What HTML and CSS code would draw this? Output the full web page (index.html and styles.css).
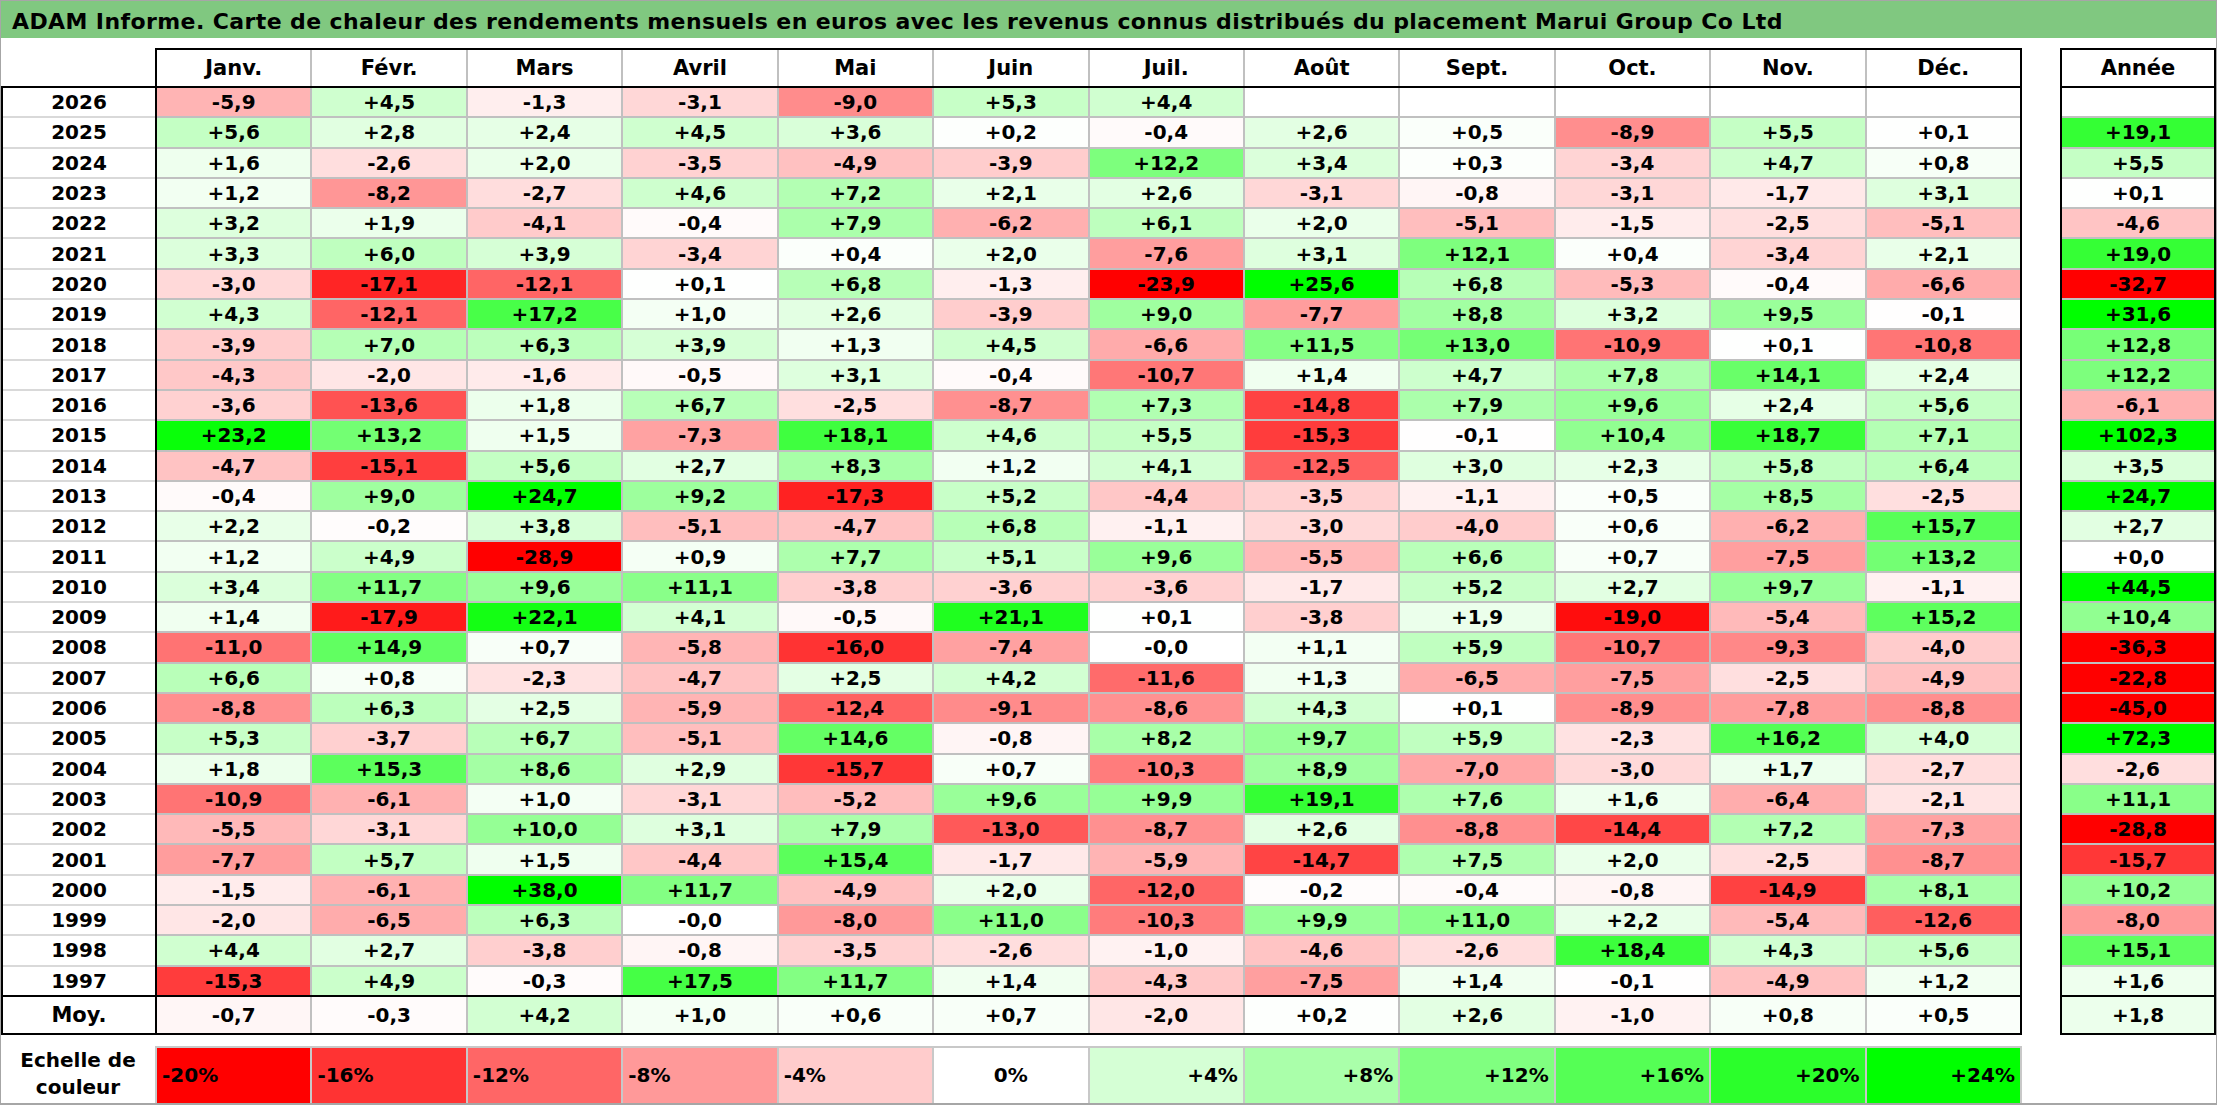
FILE: index.html
```html
<!DOCTYPE html>
<html lang="fr">
<head>
<meta charset="utf-8">
<title>ADAM Informe - Marui Group Co Ltd</title>
<link rel="stylesheet" href="styles.css">
</head>
<body>
<div class="sheet">
  <div class="title">ADAM Informe. Carte de chaleur des rendements mensuels en euros avec les revenus connus distribués du placement Marui Group Co Ltd</div>
  <div class="main">
    <div class="years">
      <div class="yhead"></div>
      <div class="ybox">
        <div class="ybody">
          <div class="yl">2026</div><div class="yl">2025</div><div class="yl">2024</div><div class="yl">2023</div><div class="yl">2022</div>
          <div class="yl">2021</div><div class="yl">2020</div><div class="yl">2019</div><div class="yl">2018</div><div class="yl">2017</div>
          <div class="yl">2016</div><div class="yl">2015</div><div class="yl">2014</div><div class="yl">2013</div><div class="yl">2012</div>
          <div class="yl">2011</div><div class="yl">2010</div><div class="yl">2009</div><div class="yl">2008</div><div class="yl">2007</div>
          <div class="yl">2006</div><div class="yl">2005</div><div class="yl">2004</div><div class="yl">2003</div><div class="yl">2002</div>
          <div class="yl">2001</div><div class="yl">2000</div><div class="yl">1999</div><div class="yl">1998</div><div class="yl">1997</div>
        </div>
        <div class="yavg">Moy.</div>
      </div>
    </div>

    <div class="months">
      <div class="hrow">
        <div class="h">Janv.</div><div class="h">Févr.</div><div class="h">Mars</div><div class="h">Avril</div><div class="h">Mai</div><div class="h">Juin</div>
        <div class="h">Juil.</div><div class="h">Août</div><div class="h">Sept.</div><div class="h">Oct.</div><div class="h">Nov.</div><div class="h">Déc.</div>
      </div>
      <div class="body">
        <!-- 2026 -->
        <div class="c" style="--v:-5.9">-5,9</div><div class="c" style="--v:4.5">+4,5</div><div class="c" style="--v:-1.3">-1,3</div><div class="c" style="--v:-3.1">-3,1</div><div class="c" style="--v:-9.0">-9,0</div><div class="c" style="--v:5.3">+5,3</div><div class="c" style="--v:4.4">+4,4</div><div class="c e"></div><div class="c e"></div><div class="c e"></div><div class="c e"></div><div class="c e"></div>
        <!-- 2025 -->
        <div class="c" style="--v:5.6">+5,6</div><div class="c" style="--v:2.8">+2,8</div><div class="c" style="--v:2.4">+2,4</div><div class="c" style="--v:4.5">+4,5</div><div class="c" style="--v:3.6">+3,6</div><div class="c" style="--v:0.2">+0,2</div><div class="c" style="--v:-0.4">-0,4</div><div class="c" style="--v:2.6">+2,6</div><div class="c" style="--v:0.5">+0,5</div><div class="c" style="--v:-8.9">-8,9</div><div class="c" style="--v:5.5">+5,5</div><div class="c" style="--v:0.1">+0,1</div>
        <!-- 2024 -->
        <div class="c" style="--v:1.6">+1,6</div><div class="c" style="--v:-2.6">-2,6</div><div class="c" style="--v:2.0">+2,0</div><div class="c" style="--v:-3.5">-3,5</div><div class="c" style="--v:-4.9">-4,9</div><div class="c" style="--v:-3.9">-3,9</div><div class="c" style="--v:12.2">+12,2</div><div class="c" style="--v:3.4">+3,4</div><div class="c" style="--v:0.3">+0,3</div><div class="c" style="--v:-3.4">-3,4</div><div class="c" style="--v:4.7">+4,7</div><div class="c" style="--v:0.8">+0,8</div>
        <!-- 2023 -->
        <div class="c" style="--v:1.2">+1,2</div><div class="c" style="--v:-8.2">-8,2</div><div class="c" style="--v:-2.7">-2,7</div><div class="c" style="--v:4.6">+4,6</div><div class="c" style="--v:7.2">+7,2</div><div class="c" style="--v:2.1">+2,1</div><div class="c" style="--v:2.6">+2,6</div><div class="c" style="--v:-3.1">-3,1</div><div class="c" style="--v:-0.8">-0,8</div><div class="c" style="--v:-3.1">-3,1</div><div class="c" style="--v:-1.7">-1,7</div><div class="c" style="--v:3.1">+3,1</div>
        <!-- 2022 -->
        <div class="c" style="--v:3.2">+3,2</div><div class="c" style="--v:1.9">+1,9</div><div class="c" style="--v:-4.1">-4,1</div><div class="c" style="--v:-0.4">-0,4</div><div class="c" style="--v:7.9">+7,9</div><div class="c" style="--v:-6.2">-6,2</div><div class="c" style="--v:6.1">+6,1</div><div class="c" style="--v:2.0">+2,0</div><div class="c" style="--v:-5.1">-5,1</div><div class="c" style="--v:-1.5">-1,5</div><div class="c" style="--v:-2.5">-2,5</div><div class="c" style="--v:-5.1">-5,1</div>
        <!-- 2021 -->
        <div class="c" style="--v:3.3">+3,3</div><div class="c" style="--v:6.0">+6,0</div><div class="c" style="--v:3.9">+3,9</div><div class="c" style="--v:-3.4">-3,4</div><div class="c" style="--v:0.4">+0,4</div><div class="c" style="--v:2.0">+2,0</div><div class="c" style="--v:-7.6">-7,6</div><div class="c" style="--v:3.1">+3,1</div><div class="c" style="--v:12.1">+12,1</div><div class="c" style="--v:0.4">+0,4</div><div class="c" style="--v:-3.4">-3,4</div><div class="c" style="--v:2.1">+2,1</div>
        <!-- 2020 -->
        <div class="c" style="--v:-3.0">-3,0</div><div class="c" style="--v:-17.1">-17,1</div><div class="c" style="--v:-12.1">-12,1</div><div class="c" style="--v:0.1">+0,1</div><div class="c" style="--v:6.8">+6,8</div><div class="c" style="--v:-1.3">-1,3</div><div class="c" style="--v:-23.9">-23,9</div><div class="c" style="--v:25.6">+25,6</div><div class="c" style="--v:6.8">+6,8</div><div class="c" style="--v:-5.3">-5,3</div><div class="c" style="--v:-0.4">-0,4</div><div class="c" style="--v:-6.6">-6,6</div>
        <!-- 2019 -->
        <div class="c" style="--v:4.3">+4,3</div><div class="c" style="--v:-12.1">-12,1</div><div class="c" style="--v:17.2">+17,2</div><div class="c" style="--v:1.0">+1,0</div><div class="c" style="--v:2.6">+2,6</div><div class="c" style="--v:-3.9">-3,9</div><div class="c" style="--v:9.0">+9,0</div><div class="c" style="--v:-7.7">-7,7</div><div class="c" style="--v:8.8">+8,8</div><div class="c" style="--v:3.2">+3,2</div><div class="c" style="--v:9.5">+9,5</div><div class="c" style="--v:-0.1">-0,1</div>
        <!-- 2018 -->
        <div class="c" style="--v:-3.9">-3,9</div><div class="c" style="--v:7.0">+7,0</div><div class="c" style="--v:6.3">+6,3</div><div class="c" style="--v:3.9">+3,9</div><div class="c" style="--v:1.3">+1,3</div><div class="c" style="--v:4.5">+4,5</div><div class="c" style="--v:-6.6">-6,6</div><div class="c" style="--v:11.5">+11,5</div><div class="c" style="--v:13.0">+13,0</div><div class="c" style="--v:-10.9">-10,9</div><div class="c" style="--v:0.1">+0,1</div><div class="c" style="--v:-10.8">-10,8</div>
        <!-- 2017 -->
        <div class="c" style="--v:-4.3">-4,3</div><div class="c" style="--v:-2.0">-2,0</div><div class="c" style="--v:-1.6">-1,6</div><div class="c" style="--v:-0.5">-0,5</div><div class="c" style="--v:3.1">+3,1</div><div class="c" style="--v:-0.4">-0,4</div><div class="c" style="--v:-10.7">-10,7</div><div class="c" style="--v:1.4">+1,4</div><div class="c" style="--v:4.7">+4,7</div><div class="c" style="--v:7.8">+7,8</div><div class="c" style="--v:14.1">+14,1</div><div class="c" style="--v:2.4">+2,4</div>
        <!-- 2016 -->
        <div class="c" style="--v:-3.6">-3,6</div><div class="c" style="--v:-13.6">-13,6</div><div class="c" style="--v:1.8">+1,8</div><div class="c" style="--v:6.7">+6,7</div><div class="c" style="--v:-2.5">-2,5</div><div class="c" style="--v:-8.7">-8,7</div><div class="c" style="--v:7.3">+7,3</div><div class="c" style="--v:-14.8">-14,8</div><div class="c" style="--v:7.9">+7,9</div><div class="c" style="--v:9.6">+9,6</div><div class="c" style="--v:2.4">+2,4</div><div class="c" style="--v:5.6">+5,6</div>
        <!-- 2015 -->
        <div class="c" style="--v:23.2">+23,2</div><div class="c" style="--v:13.2">+13,2</div><div class="c" style="--v:1.5">+1,5</div><div class="c" style="--v:-7.3">-7,3</div><div class="c" style="--v:18.1">+18,1</div><div class="c" style="--v:4.6">+4,6</div><div class="c" style="--v:5.5">+5,5</div><div class="c" style="--v:-15.3">-15,3</div><div class="c" style="--v:-0.1">-0,1</div><div class="c" style="--v:10.4">+10,4</div><div class="c" style="--v:18.7">+18,7</div><div class="c" style="--v:7.1">+7,1</div>
        <!-- 2014 -->
        <div class="c" style="--v:-4.7">-4,7</div><div class="c" style="--v:-15.1">-15,1</div><div class="c" style="--v:5.6">+5,6</div><div class="c" style="--v:2.7">+2,7</div><div class="c" style="--v:8.3">+8,3</div><div class="c" style="--v:1.2">+1,2</div><div class="c" style="--v:4.1">+4,1</div><div class="c" style="--v:-12.5">-12,5</div><div class="c" style="--v:3.0">+3,0</div><div class="c" style="--v:2.3">+2,3</div><div class="c" style="--v:5.8">+5,8</div><div class="c" style="--v:6.4">+6,4</div>
        <!-- 2013 -->
        <div class="c" style="--v:-0.4">-0,4</div><div class="c" style="--v:9.0">+9,0</div><div class="c" style="--v:24.7">+24,7</div><div class="c" style="--v:9.2">+9,2</div><div class="c" style="--v:-17.3">-17,3</div><div class="c" style="--v:5.2">+5,2</div><div class="c" style="--v:-4.4">-4,4</div><div class="c" style="--v:-3.5">-3,5</div><div class="c" style="--v:-1.1">-1,1</div><div class="c" style="--v:0.5">+0,5</div><div class="c" style="--v:8.5">+8,5</div><div class="c" style="--v:-2.5">-2,5</div>
        <!-- 2012 -->
        <div class="c" style="--v:2.2">+2,2</div><div class="c" style="--v:-0.2">-0,2</div><div class="c" style="--v:3.8">+3,8</div><div class="c" style="--v:-5.1">-5,1</div><div class="c" style="--v:-4.7">-4,7</div><div class="c" style="--v:6.8">+6,8</div><div class="c" style="--v:-1.1">-1,1</div><div class="c" style="--v:-3.0">-3,0</div><div class="c" style="--v:-4.0">-4,0</div><div class="c" style="--v:0.6">+0,6</div><div class="c" style="--v:-6.2">-6,2</div><div class="c" style="--v:15.7">+15,7</div>
        <!-- 2011 -->
        <div class="c" style="--v:1.2">+1,2</div><div class="c" style="--v:4.9">+4,9</div><div class="c" style="--v:-28.9">-28,9</div><div class="c" style="--v:0.9">+0,9</div><div class="c" style="--v:7.7">+7,7</div><div class="c" style="--v:5.1">+5,1</div><div class="c" style="--v:9.6">+9,6</div><div class="c" style="--v:-5.5">-5,5</div><div class="c" style="--v:6.6">+6,6</div><div class="c" style="--v:0.7">+0,7</div><div class="c" style="--v:-7.5">-7,5</div><div class="c" style="--v:13.2">+13,2</div>
        <!-- 2010 -->
        <div class="c" style="--v:3.4">+3,4</div><div class="c" style="--v:11.7">+11,7</div><div class="c" style="--v:9.6">+9,6</div><div class="c" style="--v:11.1">+11,1</div><div class="c" style="--v:-3.8">-3,8</div><div class="c" style="--v:-3.6">-3,6</div><div class="c" style="--v:-3.6">-3,6</div><div class="c" style="--v:-1.7">-1,7</div><div class="c" style="--v:5.2">+5,2</div><div class="c" style="--v:2.7">+2,7</div><div class="c" style="--v:9.7">+9,7</div><div class="c" style="--v:-1.1">-1,1</div>
        <!-- 2009 -->
        <div class="c" style="--v:1.4">+1,4</div><div class="c" style="--v:-17.9">-17,9</div><div class="c" style="--v:22.1">+22,1</div><div class="c" style="--v:4.1">+4,1</div><div class="c" style="--v:-0.5">-0,5</div><div class="c" style="--v:21.1">+21,1</div><div class="c" style="--v:0.1">+0,1</div><div class="c" style="--v:-3.8">-3,8</div><div class="c" style="--v:1.9">+1,9</div><div class="c" style="--v:-19.0">-19,0</div><div class="c" style="--v:-5.4">-5,4</div><div class="c" style="--v:15.2">+15,2</div>
        <!-- 2008 -->
        <div class="c" style="--v:-11.0">-11,0</div><div class="c" style="--v:14.9">+14,9</div><div class="c" style="--v:0.7">+0,7</div><div class="c" style="--v:-5.8">-5,8</div><div class="c" style="--v:-16.0">-16,0</div><div class="c" style="--v:-7.4">-7,4</div><div class="c" style="--v:0">-0,0</div><div class="c" style="--v:1.1">+1,1</div><div class="c" style="--v:5.9">+5,9</div><div class="c" style="--v:-10.7">-10,7</div><div class="c" style="--v:-9.3">-9,3</div><div class="c" style="--v:-4.0">-4,0</div>
        <!-- 2007 -->
        <div class="c" style="--v:6.6">+6,6</div><div class="c" style="--v:0.8">+0,8</div><div class="c" style="--v:-2.3">-2,3</div><div class="c" style="--v:-4.7">-4,7</div><div class="c" style="--v:2.5">+2,5</div><div class="c" style="--v:4.2">+4,2</div><div class="c" style="--v:-11.6">-11,6</div><div class="c" style="--v:1.3">+1,3</div><div class="c" style="--v:-6.5">-6,5</div><div class="c" style="--v:-7.5">-7,5</div><div class="c" style="--v:-2.5">-2,5</div><div class="c" style="--v:-4.9">-4,9</div>
        <!-- 2006 -->
        <div class="c" style="--v:-8.8">-8,8</div><div class="c" style="--v:6.3">+6,3</div><div class="c" style="--v:2.5">+2,5</div><div class="c" style="--v:-5.9">-5,9</div><div class="c" style="--v:-12.4">-12,4</div><div class="c" style="--v:-9.1">-9,1</div><div class="c" style="--v:-8.6">-8,6</div><div class="c" style="--v:4.3">+4,3</div><div class="c" style="--v:0.1">+0,1</div><div class="c" style="--v:-8.9">-8,9</div><div class="c" style="--v:-7.8">-7,8</div><div class="c" style="--v:-8.8">-8,8</div>
        <!-- 2005 -->
        <div class="c" style="--v:5.3">+5,3</div><div class="c" style="--v:-3.7">-3,7</div><div class="c" style="--v:6.7">+6,7</div><div class="c" style="--v:-5.1">-5,1</div><div class="c" style="--v:14.6">+14,6</div><div class="c" style="--v:-0.8">-0,8</div><div class="c" style="--v:8.2">+8,2</div><div class="c" style="--v:9.7">+9,7</div><div class="c" style="--v:5.9">+5,9</div><div class="c" style="--v:-2.3">-2,3</div><div class="c" style="--v:16.2">+16,2</div><div class="c" style="--v:4.0">+4,0</div>
        <!-- 2004 -->
        <div class="c" style="--v:1.8">+1,8</div><div class="c" style="--v:15.3">+15,3</div><div class="c" style="--v:8.6">+8,6</div><div class="c" style="--v:2.9">+2,9</div><div class="c" style="--v:-15.7">-15,7</div><div class="c" style="--v:0.7">+0,7</div><div class="c" style="--v:-10.3">-10,3</div><div class="c" style="--v:8.9">+8,9</div><div class="c" style="--v:-7.0">-7,0</div><div class="c" style="--v:-3.0">-3,0</div><div class="c" style="--v:1.7">+1,7</div><div class="c" style="--v:-2.7">-2,7</div>
        <!-- 2003 -->
        <div class="c" style="--v:-10.9">-10,9</div><div class="c" style="--v:-6.1">-6,1</div><div class="c" style="--v:1.0">+1,0</div><div class="c" style="--v:-3.1">-3,1</div><div class="c" style="--v:-5.2">-5,2</div><div class="c" style="--v:9.6">+9,6</div><div class="c" style="--v:9.9">+9,9</div><div class="c" style="--v:19.1">+19,1</div><div class="c" style="--v:7.6">+7,6</div><div class="c" style="--v:1.6">+1,6</div><div class="c" style="--v:-6.4">-6,4</div><div class="c" style="--v:-2.1">-2,1</div>
        <!-- 2002 -->
        <div class="c" style="--v:-5.5">-5,5</div><div class="c" style="--v:-3.1">-3,1</div><div class="c" style="--v:10.0">+10,0</div><div class="c" style="--v:3.1">+3,1</div><div class="c" style="--v:7.9">+7,9</div><div class="c" style="--v:-13.0">-13,0</div><div class="c" style="--v:-8.7">-8,7</div><div class="c" style="--v:2.6">+2,6</div><div class="c" style="--v:-8.8">-8,8</div><div class="c" style="--v:-14.4">-14,4</div><div class="c" style="--v:7.2">+7,2</div><div class="c" style="--v:-7.3">-7,3</div>
        <!-- 2001 -->
        <div class="c" style="--v:-7.7">-7,7</div><div class="c" style="--v:5.7">+5,7</div><div class="c" style="--v:1.5">+1,5</div><div class="c" style="--v:-4.4">-4,4</div><div class="c" style="--v:15.4">+15,4</div><div class="c" style="--v:-1.7">-1,7</div><div class="c" style="--v:-5.9">-5,9</div><div class="c" style="--v:-14.7">-14,7</div><div class="c" style="--v:7.5">+7,5</div><div class="c" style="--v:2.0">+2,0</div><div class="c" style="--v:-2.5">-2,5</div><div class="c" style="--v:-8.7">-8,7</div>
        <!-- 2000 -->
        <div class="c" style="--v:-1.5">-1,5</div><div class="c" style="--v:-6.1">-6,1</div><div class="c" style="--v:38.0">+38,0</div><div class="c" style="--v:11.7">+11,7</div><div class="c" style="--v:-4.9">-4,9</div><div class="c" style="--v:2.0">+2,0</div><div class="c" style="--v:-12.0">-12,0</div><div class="c" style="--v:-0.2">-0,2</div><div class="c" style="--v:-0.4">-0,4</div><div class="c" style="--v:-0.8">-0,8</div><div class="c" style="--v:-14.9">-14,9</div><div class="c" style="--v:8.1">+8,1</div>
        <!-- 1999 -->
        <div class="c" style="--v:-2.0">-2,0</div><div class="c" style="--v:-6.5">-6,5</div><div class="c" style="--v:6.3">+6,3</div><div class="c" style="--v:0">-0,0</div><div class="c" style="--v:-8.0">-8,0</div><div class="c" style="--v:11.0">+11,0</div><div class="c" style="--v:-10.3">-10,3</div><div class="c" style="--v:9.9">+9,9</div><div class="c" style="--v:11.0">+11,0</div><div class="c" style="--v:2.2">+2,2</div><div class="c" style="--v:-5.4">-5,4</div><div class="c" style="--v:-12.6">-12,6</div>
        <!-- 1998 -->
        <div class="c" style="--v:4.4">+4,4</div><div class="c" style="--v:2.7">+2,7</div><div class="c" style="--v:-3.8">-3,8</div><div class="c" style="--v:-0.8">-0,8</div><div class="c" style="--v:-3.5">-3,5</div><div class="c" style="--v:-2.6">-2,6</div><div class="c" style="--v:-1.0">-1,0</div><div class="c" style="--v:-4.6">-4,6</div><div class="c" style="--v:-2.6">-2,6</div><div class="c" style="--v:18.4">+18,4</div><div class="c" style="--v:4.3">+4,3</div><div class="c" style="--v:5.6">+5,6</div>
        <!-- 1997 -->
        <div class="c" style="--v:-15.3">-15,3</div><div class="c" style="--v:4.9">+4,9</div><div class="c" style="--v:-0.3">-0,3</div><div class="c" style="--v:17.5">+17,5</div><div class="c" style="--v:11.7">+11,7</div><div class="c" style="--v:1.4">+1,4</div><div class="c" style="--v:-4.3">-4,3</div><div class="c" style="--v:-7.5">-7,5</div><div class="c" style="--v:1.4">+1,4</div><div class="c" style="--v:-0.1">-0,1</div><div class="c" style="--v:-4.9">-4,9</div><div class="c" style="--v:1.2">+1,2</div>
      </div>
      <div class="avg">
        <div class="c" style="--v:-0.7">-0,7</div><div class="c" style="--v:-0.3">-0,3</div><div class="c" style="--v:4.2">+4,2</div><div class="c" style="--v:1.0">+1,0</div><div class="c" style="--v:0.6">+0,6</div><div class="c" style="--v:0.7">+0,7</div><div class="c" style="--v:-2.0">-2,0</div><div class="c" style="--v:0.2">+0,2</div><div class="c" style="--v:2.6">+2,6</div><div class="c" style="--v:-1.0">-1,0</div><div class="c" style="--v:0.8">+0,8</div><div class="c" style="--v:0.5">+0,5</div>
      </div>
    </div>

    <div class="annual">
      <div class="hrow"><div class="h">Année</div></div>
      <div class="body">
        <div class="c e"></div>
        <div class="c" style="--v:19.1">+19,1</div>
        <div class="c" style="--v:5.5">+5,5</div>
        <div class="c" style="--v:0.1">+0,1</div>
        <div class="c" style="--v:-4.6">-4,6</div>
        <div class="c" style="--v:19.0">+19,0</div>
        <div class="c" style="--v:-32.7">-32,7</div>
        <div class="c" style="--v:31.6">+31,6</div>
        <div class="c" style="--v:12.8">+12,8</div>
        <div class="c" style="--v:12.2">+12,2</div>
        <div class="c" style="--v:-6.1">-6,1</div>
        <div class="c" style="--v:102.3">+102,3</div>
        <div class="c" style="--v:3.5">+3,5</div>
        <div class="c" style="--v:24.7">+24,7</div>
        <div class="c" style="--v:2.7">+2,7</div>
        <div class="c" style="--v:0">+0,0</div>
        <div class="c" style="--v:44.5">+44,5</div>
        <div class="c" style="--v:10.4">+10,4</div>
        <div class="c" style="--v:-36.3">-36,3</div>
        <div class="c" style="--v:-22.8">-22,8</div>
        <div class="c" style="--v:-45.0">-45,0</div>
        <div class="c" style="--v:72.3">+72,3</div>
        <div class="c" style="--v:-2.6">-2,6</div>
        <div class="c" style="--v:11.1">+11,1</div>
        <div class="c" style="--v:-28.8">-28,8</div>
        <div class="c" style="--v:-15.7">-15,7</div>
        <div class="c" style="--v:10.2">+10,2</div>
        <div class="c" style="--v:-8.0">-8,0</div>
        <div class="c" style="--v:15.1">+15,1</div>
        <div class="c" style="--v:1.6">+1,6</div>
      </div>
      <div class="avg"><div class="c" style="--v:1.8">+1,8</div></div>
    </div>
  </div>

  <div class="scale">
    <div class="slabel">Echelle de<br>couleur</div>
    <div class="sgrid">
      <div class="s l" style="--v:-20">-20%</div>
      <div class="s l" style="--v:-16">-16%</div>
      <div class="s l" style="--v:-12">-12%</div>
      <div class="s l" style="--v:-8">-8%</div>
      <div class="s l" style="--v:-4">-4%</div>
      <div class="s m" style="--v:0">0%</div>
      <div class="s r" style="--v:4">+4%</div>
      <div class="s r" style="--v:8">+8%</div>
      <div class="s r" style="--v:12">+12%</div>
      <div class="s r" style="--v:16">+16%</div>
      <div class="s r" style="--v:20">+20%</div>
      <div class="s r" style="--v:24">+24%</div>
    </div>
  </div>
</div>
</body>
</html>
```

FILE: styles.css
```css
* { box-sizing: border-box; }

html, body {
  margin: 0;
  padding: 0;
  background: #fff;
}

body {
  font-family: "DejaVu Sans", "Liberation Sans", sans-serif;
  font-weight: 700;
  color: #000;
}

.sheet {
  width: 2217px;
  height: 1105px;
  border: 1px solid #a6a6a6;
  border-bottom-width: 2px;
  overflow: hidden;
}

.title {
  height: 37px;
  background: #80c880;
  font-size: 22px;
  letter-spacing: 0.4px;
  line-height: 32px;
  padding: 5px 0 0 11px;
  white-space: nowrap;
  overflow: hidden;
}

.main {
  display: flex;
  align-items: flex-start;
  margin-top: 10px;
}

/* year labels column */
.years { width: 154px; flex: none; }
.yhead { height: 38px; }
.ybox {
  border: 2px solid #000;
  border-right: 0;
}
.ybody {
  display: grid;
  grid-auto-rows: 28.3px;
  row-gap: 2px;
  background: #d9d9d9;
}
.yl, .yavg {
  display: flex;
  align-items: center;
  justify-content: center;
  background: #fff;
  font-size: 20px;
}
.yavg {
  height: 38px;
  border-top: 2px solid #000;
  font-size: 21px;
}

/* month and annual blocks */
.months { width: 1867px; flex: none; border: 2px solid #000; }
.annual { width: 156px; flex: none; margin-left: 38px; border: 2px solid #000; }

.hrow, .body, .avg {
  display: grid;
  grid-template-columns: repeat(12, 1fr);
  column-gap: 2px;
  background: #c0c0c0;
}
.annual .hrow, .annual .body, .annual .avg { grid-template-columns: 1fr; }

.hrow { height: 36px; }
.body {
  grid-auto-rows: 28.3px;
  row-gap: 2px;
  border-top: 2px solid #000;
  border-bottom: 2px solid #000;
}
.avg { height: 36px; }

.h {
  display: flex;
  align-items: center;
  justify-content: center;
  background: #fff;
  font-size: 21px;
}

/* heat colour: red towards -20 %, green towards +24 % */
.c, .s {
  background: rgb(
    calc(255 - 255 * clamp(0, var(--v), 24) / 24),
    calc(255 - 255 * clamp(0, -1 * var(--v), 20) / 20),
    calc(255 - 255 * clamp(0, var(--v), 24) / 24 - 255 * clamp(0, -1 * var(--v), 20) / 20)
  );
}

.c {
  display: flex;
  align-items: center;
  justify-content: center;
  font-size: 20px;
}
.c.e { background: #fff; }

/* colour scale */
.scale {
  display: flex;
  height: 57px;
  margin-top: 11px;
}
.slabel {
  width: 154px;
  flex: none;
  display: flex;
  align-items: center;
  justify-content: center;
  text-align: center;
  font-size: 20px;
  line-height: 27px;
}
.sgrid {
  width: 1867px;
  flex: none;
  display: grid;
  grid-template-columns: repeat(12, 1fr);
  column-gap: 2px;
  padding: 2px 2px 0;
  background: #c8c8c8;
}
.s {
  display: flex;
  align-items: center;
  padding: 0 5px;
  font-size: 20px;
}
.s.l { justify-content: flex-start; }
.s.m { justify-content: center; }
.s.r { justify-content: flex-end; }
```
